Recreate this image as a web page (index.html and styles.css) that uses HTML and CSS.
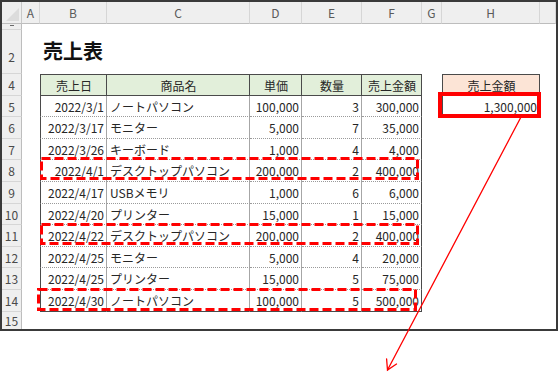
FILE: index.html
```html
<!DOCTYPE html>
<html lang="ja">
<head>
<meta charset="utf-8">
<title>売上表</title>
<link rel="stylesheet" href="styles.css">
</head>
<body>
<div class="page">
  <div class="sheet">
    <div class="grid">
      <!-- column headers -->
      <div class="corner"><span class="tri"></span></div>
      <div class="ch">A</div><div class="ch">B</div><div class="ch">C</div><div class="ch">D</div><div class="ch">E</div><div class="ch">F</div><div class="ch">G</div><div class="ch">H</div><div class="ch"></div>
      <!-- row 1 (mostly scrolled out of view) -->
      <div class="rh r1"></div><div class="c"></div><div class="c"></div><div class="c"></div><div class="c"></div><div class="c"></div><div class="c"></div><div class="c"></div><div class="c"></div><div class="c"></div>
      <!-- row 2 -->
      <div class="rh r2">2</div><div class="c"></div><div class="c title">売上表</div><div class="c"></div><div class="c"></div><div class="c"></div><div class="c"></div><div class="c"></div><div class="c"></div><div class="c"></div>
      <!-- row 4 -->
      <div class="rh">4</div><div class="c"></div>
      <div class="th first">売上日</div><div class="th">商品名</div><div class="th">単価</div><div class="th">数量</div><div class="th last">売上金額</div>
      <div class="c"></div><div class="th2">売上金額</div><div class="c"></div>
      <!-- row 5 -->
      <div class="rh">5</div><div class="c"></div>
      <div class="td first num">2022/3/1</div><div class="td">ノートパソコン</div><div class="td num">100,000</div><div class="td num">3</div><div class="td last num">300,000</div>
      <div class="c"></div><div class="tv num">1,300,000</div><div class="c"></div>
      <!-- row 6 -->
      <div class="rh">6</div><div class="c"></div>
      <div class="td first num">2022/3/17</div><div class="td">モニター</div><div class="td num">5,000</div><div class="td num">7</div><div class="td last num">35,000</div>
      <div class="c"></div><div class="c"></div><div class="c"></div>
      <!-- row 7 -->
      <div class="rh">7</div><div class="c"></div>
      <div class="td first num">2022/3/26</div><div class="td">キーボード</div><div class="td num">1,000</div><div class="td num">4</div><div class="td last num">4,000</div>
      <div class="c"></div><div class="c"></div><div class="c"></div>
      <!-- row 8 -->
      <div class="rh">8</div><div class="c"></div>
      <div class="td first num">2022/4/1</div><div class="td">デスクトップパソコン</div><div class="td num">200,000</div><div class="td num">2</div><div class="td last num">400,000</div>
      <div class="c"></div><div class="c"></div><div class="c"></div>
      <!-- row 9 -->
      <div class="rh">9</div><div class="c"></div>
      <div class="td first num">2022/4/17</div><div class="td">USBメモリ</div><div class="td num">1,000</div><div class="td num">6</div><div class="td last num">6,000</div>
      <div class="c"></div><div class="c"></div><div class="c"></div>
      <!-- row 10 -->
      <div class="rh">10</div><div class="c"></div>
      <div class="td first num">2022/4/20</div><div class="td">プリンター</div><div class="td num">15,000</div><div class="td num">1</div><div class="td last num">15,000</div>
      <div class="c"></div><div class="c"></div><div class="c"></div>
      <!-- row 11 -->
      <div class="rh">11</div><div class="c"></div>
      <div class="td first num">2022/4/22</div><div class="td">デスクトップパソコン</div><div class="td num">200,000</div><div class="td num">2</div><div class="td last num">400,000</div>
      <div class="c"></div><div class="c"></div><div class="c"></div>
      <!-- row 12 -->
      <div class="rh">12</div><div class="c"></div>
      <div class="td first num">2022/4/25</div><div class="td">モニター</div><div class="td num">5,000</div><div class="td num">4</div><div class="td last num">20,000</div>
      <div class="c"></div><div class="c"></div><div class="c"></div>
      <!-- row 13 -->
      <div class="rh">13</div><div class="c"></div>
      <div class="td first num">2022/4/25</div><div class="td">プリンター</div><div class="td num">15,000</div><div class="td num">5</div><div class="td last num">75,000</div>
      <div class="c"></div><div class="c"></div><div class="c"></div>
      <!-- row 14 -->
      <div class="rh">14</div><div class="c"></div>
      <div class="td first num bottom">2022/4/30</div><div class="td bottom">ノートパソコン</div><div class="td num bottom">100,000</div><div class="td num bottom">5</div><div class="td last num bottom">500,000</div>
      <div class="c"></div><div class="c"></div><div class="c"></div>
      <!-- row 15 -->
      <div class="rh r15">15</div><div class="c"></div><div class="c"></div><div class="c"></div><div class="c"></div><div class="c"></div><div class="c"></div><div class="c"></div><div class="c"></div><div class="c"></div>
    </div>
  </div>
  <svg class="marks" width="559" height="379" viewBox="0 0 559 379" xmlns="http://www.w3.org/2000/svg">
    <g fill="none" stroke="#ff0000" stroke-width="3" stroke-dasharray="9 4">
      <rect x="41.5" y="158.5" width="376" height="20"/>
      <rect x="41.5" y="224.5" width="376" height="19"/>
      <rect x="38.5" y="289.5" width="377" height="20"/>
    </g>
    <rect x="440" y="94" width="99" height="22" fill="none" stroke="#ff0000" stroke-width="4"/>
    <g stroke="#ff0000" stroke-width="1.3" fill="none" stroke-linecap="round">
      <line x1="521" y1="117" x2="387.5" y2="370"/>
      <polyline points="386.6,359 387.5,370 396.5,364"/>
    </g>
  </svg>
</div>
</body>
</html>
```

FILE: styles.css
```css
* { box-sizing: border-box; }
html, body { margin: 0; padding: 0; background: #ffffff; }
body {
  font-family: "Noto Sans CJK JP", "Noto Sans", sans-serif;
  color: #262626;
}
.page {
  position: relative;
  width: 559px;
  height: 379px;
}
.sheet {
  width: 558px;
  height: 331px;
  border: 2px solid #3a3a3a;
  overflow: hidden;
  background: #ffffff;
}
.grid {
  display: grid;
  grid-template-columns: 20px 18px 67px 143px 52px 60px 60px 20px 98px 1fr;
  grid-template-rows: 22px 6px 44px 22px 21px 22px 21px 22px 22px 21px 22px 21px 22px 22px 1fr;
  height: 100%;
}
.c { background: #ffffff; }
.corner {
  position: relative;
  background: #efefef;
  border-right: 1px solid #c8c8c8;
  border-bottom: 1px solid #bdbdbd;
}
.tri {
  position: absolute;
  right: 2px;
  bottom: 2px;
  width: 0;
  height: 0;
  border-left: 13px solid transparent;
  border-bottom: 13px solid #dcdcdc;
}
.ch {
  background: #efefef;
  border-right: 1px solid #d6d6d6;
  border-bottom: 1px solid #bdbdbd;
  color: #5a5a5a;
  font-size: 12px;
  line-height: 21px;
  text-align: center;
}
.rh {
  background: #efefef;
  border-right: 1px solid #bdbdbd;
  border-bottom: 1px solid #d6d6d6;
  color: #4a4a4a;
  font-size: 12px;
  text-align: center;
  display: flex;
  align-items: center;
  justify-content: center;
  overflow: hidden;
}
.r1 { position: relative; }
.r1::after {
  content: "";
  position: absolute;
  left: 8px;
  top: 1px;
  width: 4px;
  height: 1px;
  background: #6a6a6a;
}
.r2 {
  align-items: flex-end;
  padding-bottom: 8px;
  line-height: 16px;
}
.r15 { border-bottom: none; }
.title {
  font-size: 20px;
  font-weight: 700;
  color: #111111;
  white-space: nowrap;
  display: flex;
  align-items: center;
  padding-left: 3px;
  padding-bottom: 4px;
}
.th, .td, .th2, .tv {
  font-size: 12px;
  white-space: nowrap;
  overflow: hidden;
  display: flex;
  align-items: center;
  padding: 0 2px 0 3px;
}
.th {
  background: #e2efda;
  justify-content: center;
  border-top: 1px solid #4a4a4a;
  border-right: 1px solid #4a4a4a;
  border-bottom: 1px solid #4a4a4a;
}
.th.first { border-left: 1px solid #4a4a4a; }
.td {
  border-right: 1px solid #a6a6a6;
  border-bottom: 1px dotted #9a9a9a;
}
.td.first { border-left: 1px solid #4a4a4a; }
.td.last, .th.last { border-right: 1px solid #4a4a4a; }
.td.bottom { border-bottom: 1px solid #4a4a4a; }
.num { justify-content: flex-end; }
.th2 {
  background: #fce4d6;
  justify-content: center;
  border: 1px solid #4a4a4a;
}
.tv {
  border-left: 1px solid #4a4a4a;
  border-right: 1px solid #4a4a4a;
  border-bottom: 1px solid #4a4a4a;
}
.marks {
  position: absolute;
  left: 0;
  top: 0;
  pointer-events: none;
}
```
